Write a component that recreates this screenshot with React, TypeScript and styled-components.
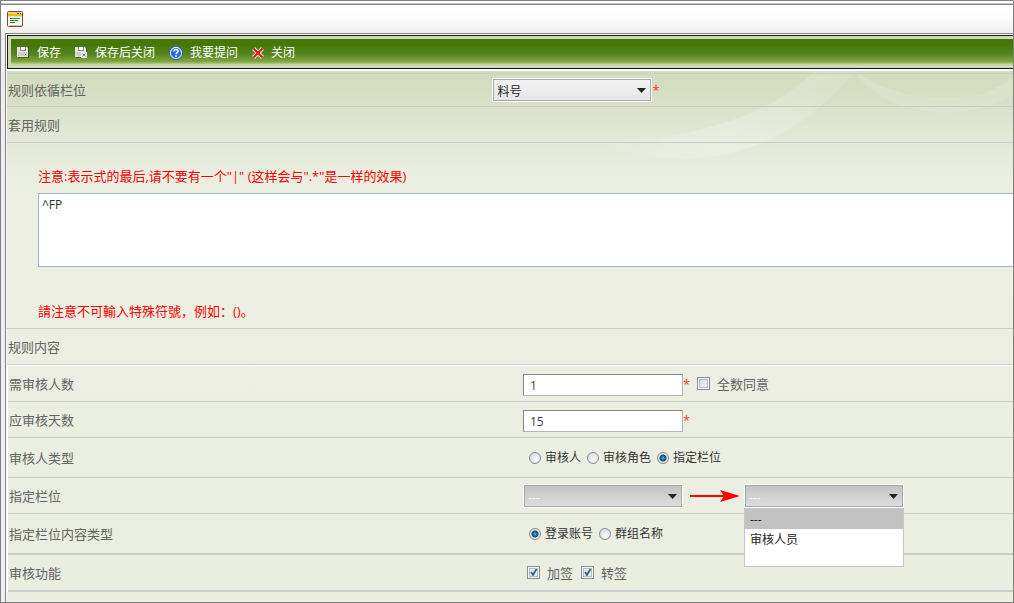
import React, { useState } from "react";
import styled, { createGlobalStyle, css } from "styled-components";

const GlobalStyle = createGlobalStyle`
  * { box-sizing: border-box; }
  body {
    margin: 0;
    background: #fff;
    color: #646464;
    font: 13px/20px "Open Sans", "Noto Sans CJK SC", sans-serif;
  }
  button, input, select, textarea { font-family: inherit; margin: 0; }
`;

const Window = styled.div`
  display: flex;
  flex-direction: column;
  min-height: 100vh;
  padding-top: 2px;
  border: 1px solid #808080;
  background: #fff;
  overflow: hidden;
`;

const TitleBar = styled.header`
  display: flex;
  align-items: center;
  height: 30px;
  padding-left: 6px;
  border-top: 1px solid #807f83;
  box-shadow: 0 -1px 0 #d2ccd2;
  margin-top: 1px;
  background: linear-gradient(#fff, #fdfdfd 40%, #eee);
`;

const Body = styled.div`
  display: flex;
  flex: 1;
  padding-left: 4px;
  background: #efedf0;
  margin-top: -1px;
`;

const Panel = styled.main`
  position: relative;
  flex: 1;
  min-width: 0;
  padding: 1px 0 0 1px;
  border: solid #85828f;
  border-width: 1px 0 0 1px;
  background: #f7faff;
`;

const Toolbar = styled.nav`
  display: flex;
  height: 34px;
  padding: 3px 0 3px 3px;
  border: 1px solid #141c10;
  border-right: 0;
  background: #cfd9b7;
`;

const ToolbarFill = styled.div`
  display: flex;
  flex: 1;
  align-items: center;
  gap: 14px;
  padding: 1px 0 0 6px;
  background: linear-gradient(#457808 0, #457808 25%, #568620 60%, #80a63e 87%, #cfd9b7 100%);
`;

const ToolButton = styled.button`
  display: flex;
  align-items: center;
  gap: 7px;
  padding: 0;
  border: 0;
  background: none;
  color: #fff;
  font-size: 12px;
  line-height: 20px;
  white-space: nowrap;
`;

const Form = styled.form`
  position: relative;
  margin-top: 1px;
  padding: 2px 0 10px;
  border-top: 1px solid #fff;
  background: linear-gradient(#d3dcbd 0, #d8dfc5 30px, #e2e8d5 66px, #eaeee0 105px, #ecefe2 130px, #eaeee0 100%);
`;

const Swoosh = styled.svg`
  position: absolute;
  top: 0;
  right: 0;
  pointer-events: none;
`;

const Row = styled.div<{ $height: number; $first?: boolean; $thick?: boolean; $inset?: boolean }>`
  position: relative;
  display: grid;
  grid-template-columns: ${(p) => (p.$first ? "48%" : "50%")} minmax(0, 1fr);
  align-items: center;
  height: ${(p) => p.$height}px;
  padding-left: ${(p) => (p.$inset ? 2 : 1)}px;
  border-top: ${(p) => (p.$first ? "1px solid #c9cbcc" : "0")};
  border-bottom: ${(p) => (p.$thick ? 2 : 1)}px solid #c9cbcc;
`;

const NoteBlock = styled.div`
  position: relative;
  height: 186px;
  padding: 23px 0 0 31px;
  border-bottom: 1px solid #c9cbcc;
`;

const InnerForm = styled.div`
  border-left: 1px solid #fff;
  border-top: 1px solid #fff;
`;

const Warning = styled.p`
  margin: 0;
  color: #f00;
`;

const RuleText = styled.textarea`
  display: block;
  width: 100%;
  height: 74px;
  margin: 7px 0 34px;
  padding: 3px;
  border: 1px solid #9ab5d6;
  border-right: 0;
  background: #fff;
  color: #333;
  font-size: 12px;
  line-height: 16px;
  resize: none;
  outline: 0;
`;

const Controls = styled.div<{ $indent: number; $gap?: number }>`
  display: flex;
  align-items: center;
  gap: ${(p) => p.$gap ?? 0}px;
  padding-left: ${(p) => p.$indent}px;
`;

const NumberBox = styled.input`
  width: 160px;
  height: 22px;
  margin-top: 2px;
  padding: 2px 6px 0;
  border: 1px solid #888;
  border-right-color: #b5b5b5;
  border-bottom-color: #b5b5b5;
  background: #fff;
  color: #444;
  font-size: 12px;
  outline: 0;
`;

const Star = styled.span`
  width: 14px;
  color: #f33;
`;

const Choice = styled.label<{ $large?: boolean }>`
  display: flex;
  align-items: center;
  gap: ${(p) => (p.$large ? 7 : 4)}px;
  color: ${(p) => (p.$large ? "#646464" : "#333")};
  font-size: ${(p) => (p.$large ? 13 : 12)}px;
`;

const Radio = styled.input`
  appearance: none;
  width: 12px;
  height: 12px;
  border: 1px solid #858b90;
  border-radius: 50%;
  background: radial-gradient(circle at 60% 65%, #fafafa, #d0d3da);
  &:checked {
    background: radial-gradient(circle at 50% 50%, #6cc8ee 0, #2b8fbf 1px, #14486c 3px, #e8ecf0 4px);
  }
`;

const Check = styled.input`
  appearance: none;
  width: 13px;
  height: 13px;
  border: 1px solid #8e8f8f;
  box-shadow: inset 0 0 0 1px #f4f4f4, inset 0 0 0 2px #b4bcc6;
  background: linear-gradient(135deg, #ccd2da, #f8f8f8);
  &:checked {
    background: url("data:image/svg+xml,%3Csvg xmlns='http://www.w3.org/2000/svg' viewBox='0 0 11 11'%3E%3Cpath d='M3 5l2 3 3.5-6' fill='none' stroke='%233b5d96' stroke-width='1.8'/%3E%3C/svg%3E") #e9ecf1;
  }
`;

const SelectWrap = styled.div`
  position: relative;
  width: 160px;
`;

const SelectBox = styled.select<{ $dark?: boolean }>`
  appearance: none;
  display: block;
  width: 100%;
  height: 24px;
  padding: 3px 4px 0;
  border: 1px solid #fff;
  border-radius: 0;
  box-shadow: inset 0 0 0 1px #a6a8aa;
  outline: 0;
  font-size: 12px;
  ${(p) =>
    p.$dark
      ? css`
          background: linear-gradient(#c2c2c2, #dedede);
          color: #fff;
        `
      : css`
          background: linear-gradient(#f4f4f4, #e6e6e6);
          color: #222;
        `}
`;

const Caret = styled.svg`
  position: absolute;
  top: 10px;
  right: 6px;
  pointer-events: none;
`;

const Arrow = styled.svg`
  width: 61px;
  height: 14px;
  padding: 0 4px 0 7px;
`;

const Menu = styled.ul`
  position: absolute;
  z-index: 2;
  top: 24px;
  left: 0;
  width: 160px;
  height: 59px;
  margin: 0;
  padding: 0;
  border: 1px solid #c4c6ca;
  background: #fff;
  color: #222;
  font-size: 12px;
  list-style: none;
`;

const MenuItem = styled.li<{ $selected?: boolean }>`
  height: 20px;
  padding-left: 5px;
  line-height: 22px;
  background: ${(p) => (p.$selected ? "#c2c2c2" : "#fff")};
`;

function FormIcon() {
  return (
    <svg width="17" height="17" viewBox="0 0 17 17" aria-hidden="true">
      <rect x="0.5" y="0.5" width="15" height="15" rx="1" fill="#fff" stroke="#6b5132" />
      <rect x="1" y="1" width="14" height="4" fill="#f2b529" />
      <rect x="1" y="1" width="14" height="2" fill="#fad55c" />
      <path d="M10 2.5h2M13 2.5h1" stroke="#5b4513" />
      <rect x="1" y="5" width="14" height="1" fill="#dbe3cf" />
      <path d="M3 7.5h10M3 9.5h8M3 11.5h5" stroke="#2f8a25" />
      <path d="M2 14.5h13" stroke="#c9c9c9" />
    </svg>
  );
}

function SaveIcon({ closing }: { closing?: boolean }) {
  return (
    <svg width="13" height="13" viewBox="0 0 13 13" aria-hidden="true">
      <path d="M1 1h10l1 1v10H1z" fill="#2f4d0b" opacity=".7" />
      <path d="M0 1h10l1 1v9H0z" fill="#e2e2e2" />
      <rect x="3" y="1" width="6" height="4" fill="#8a8a8a" />
      <rect x="4" y="1" width="4" height="3" fill="#fff" />
      <rect x="1" y="6" width="9" height="4" fill="#cdcdcd" />
      <rect x="8" y="8" width="1" height="1" fill="#333" />
      {closing && (
        <>
          <rect x="6" y="6" width="6" height="6" fill="#f2f2f2" />
          <path d="M7.500 7.500l3 3M10.500 7.500l-3 3" stroke="#777" strokeWidth="1" />
        </>
      )}
    </svg>
  );
}

function HelpIcon() {
  return (
    <svg width="14" height="14" viewBox="0 0 14 14" aria-hidden="true">
      <circle cx="7" cy="7" r="7" fill="#2b62bd" />
      <circle cx="7" cy="7" r="5.6" fill="#2a66dd" stroke="#dcebff" strokeWidth="1.1" />
      <path d="M5 5.4c0-2.4 4-2.4 4-.2C9 6.700 7 6.500 7 8.300" fill="none" stroke="#fff" strokeWidth="1.500" />
      <rect x="6.200" y="9.200" width="1.600" height="1.600" fill="#fff" />
    </svg>
  );
}

function CloseIcon() {
  return (
    <svg width="12" height="12" viewBox="0 0 12 12" aria-hidden="true">
      <path d="M1.500 1.500l9 9M10.500 1.500l-9 9" stroke="#f7e6cf" strokeWidth="4" />
      <path d="M1.500 1.500l9 9M10.500 1.500l-9 9" stroke="#d8190f" strokeWidth="2" />
    </svg>
  );
}

function DropCaret() {
  return (
    <Caret width="9" height="5" viewBox="0 0 9 5" aria-hidden="true">
      <path d="M0 0h9L4.500 5z" fill="#222" />
    </Caret>
  );
}

function RadioChoice(props: { name: string; label: string; value: string; onPick: (v: string) => void }) {
  const { name, label, value, onPick } = props;
  return (
    <Choice>
      <Radio type="radio" name={name} checked={value === label} onChange={() => onPick(label)} />
      {label}
    </Choice>
  );
}

export default function App() {
  const [reviewer, setReviewer] = useState("指定栏位");
  const [content, setContent] = useState("登录账号");

  return (
    <>
      <GlobalStyle />
      <Window>
        <TitleBar>
          <FormIcon />
        </TitleBar>
        <Body>
          <Panel>
            <Toolbar>
              <ToolbarFill>
                <ToolButton type="button"><SaveIcon />保存</ToolButton>
                <ToolButton type="button"><SaveIcon closing />保存后关闭</ToolButton>
                <ToolButton type="button"><HelpIcon />我要提问</ToolButton>
                <ToolButton type="button"><CloseIcon />关闭</ToolButton>
              </ToolbarFill>
            </Toolbar>
            <Form>
              <Swoosh width="420" height="90" viewBox="0 0 420 90" aria-hidden="true">
                <defs>
                  <linearGradient id="fade" x1="0" x2="1">
                    <stop offset="0" stopColor="#fff" stopOpacity="0" />
                    <stop offset="0.5" stopColor="#fff" stopOpacity="0.25" />
                    <stop offset="1" stopColor="#fff" stopOpacity="0.1" />
                  </linearGradient>
                </defs>
                <path d="M0 70C90 70 170 50 222 0H262C220 50 170 85 90 88C50 86 20 78 0 70z" fill="url(#fade)" />
                <path d="M262 0C290 22 330 28 360 27C390 25 405 18 420 6V24C400 36 370 44 340 41C300 36 275 22 262 0z" fill="#fff" opacity=".12" />
              </Swoosh>
              <Row $height={34} $first>
                <label htmlFor="field">规则依循栏位</label>
                <Controls $indent={2}>
                  <SelectWrap>
                    <SelectBox id="field"><option>料号</option></SelectBox>
                    <DropCaret />
                  </SelectWrap>
                  <Star>*</Star>
                </Controls>
              </Row>
              <Row $height={36}><span>套用规则</span></Row>
              <NoteBlock>
                <Warning>注意:表示式的最后,请不要有一个"|" (这样会与".*"是一样的效果)</Warning>
                <RuleText aria-label="套用规则" defaultValue="^FP" />
                <Warning lang="zh-Hans">請注意不可輸入特殊符號，例如：()。</Warning>
              </NoteBlock>
              <Row $height={36}><span>规则内容</span></Row>
              <InnerForm>
                <Row $height={36}>
                  <label htmlFor="count">需审核人数</label>
                  <Controls $indent={12}>
                    <NumberBox id="count" defaultValue="1" />
                    <Star>*</Star>
                    <Choice $large><Check type="checkbox" />全数同意</Choice>
                  </Controls>
                </Row>
                <Row $height={36}>
                  <label htmlFor="days">应审核天数</label>
                  <Controls $indent={12}>
                    <NumberBox id="days" defaultValue="15" />
                    <Star>*</Star>
                  </Controls>
                </Row>
                <Row $height={40}>
                  <span>审核人类型</span>
                  <Controls $indent={18} $gap={6}>
                    {["审核人", "审核角色", "指定栏位"].map((t) => (
                      <RadioChoice key={t} name="reviewer" label={t} value={reviewer} onPick={setReviewer} />
                    ))}
                  </Controls>
                </Row>
                <Row $height={36}>
                  <label htmlFor="target">指定栏位</label>
                  <Controls $indent={12}>
                    <SelectWrap>
                      <SelectBox id="target" $dark><option>---</option></SelectBox>
                      <DropCaret />
                    </SelectWrap>
                    <Arrow viewBox="0 0 50 14" aria-hidden="true">
                      <path d="M0 7h36" stroke="#f00" strokeWidth="2" />
                      <path d="M30 1l20 6-20 6 4-6z" fill="#f00" />
                    </Arrow>
                    <SelectWrap>
                      <SelectBox $dark aria-label="指定栏位"><option>---</option></SelectBox>
                      <DropCaret />
                      <Menu role="listbox" aria-label="指定栏位">
                        <MenuItem role="option" aria-selected="true" $selected>---</MenuItem>
                        <MenuItem role="option" aria-selected="false">审核人员</MenuItem>
                      </Menu>
                    </SelectWrap>
                  </Controls>
                </Row>
                <Row $height={41} $thick>
                  <span>指定栏位内容类型</span>
                  <Controls $indent={18} $gap={6}>
                    {["登录账号", "群组名称"].map((t) => (
                      <RadioChoice key={t} name="content" label={t} value={content} onPick={setContent} />
                    ))}
                  </Controls>
                </Row>
                <Row $height={37} $thick>
                  <span>审核功能</span>
                  <Controls $indent={16} $gap={8}>
                    <Choice $large><Check type="checkbox" defaultChecked />加签</Choice>
                    <Choice $large><Check type="checkbox" defaultChecked />转签</Choice>
                  </Controls>
                </Row>
              </InnerForm>
            </Form>
          </Panel>
        </Body>
      </Window>
    </>
  );
}
